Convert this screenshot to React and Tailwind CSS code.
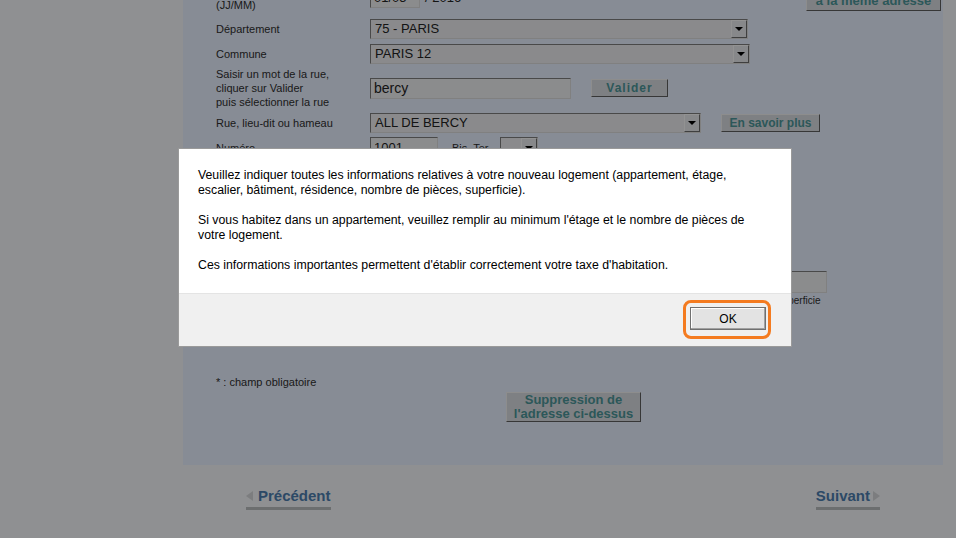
import { useState } from 'react'

function Select({ className, value }) {
    return (
        <div
            className={`flex h-[20px] border border-t-[#7a7a7a] border-l-[#7a7a7a] border-b-[#d6d6d6] border-r-[#d6d6d6] bg-[#e6e7ea] ${className}`}
        >
            <span className="flex-1 truncate pl-[4px] text-[13px] leading-[18px] text-[#222]">{value}</span>
            <span className="flex w-[16px] items-center justify-center border border-t-[#f4f4f4] border-l-[#f4f4f4] border-b-[#6a6a6a] border-r-[#6a6a6a] bg-[#e2e3e6]">
                <span className="h-0 w-0 border-x-[4px] border-t-[4px] border-x-transparent border-t-black"></span>
            </span>
        </div>
    )
}

function Field({ className, value }) {
    return (
        <div
            className={`flex items-center border border-t-[#7a7a7a] border-l-[#7a7a7a] border-b-[#d6d6d6] border-r-[#d6d6d6] bg-[#e8e9ec] pl-[3px] text-[13px] text-[#222] ${className}`}
        >
            {value}
        </div>
    )
}

function GrayButton({ className, children }) {
    return (
        <button
            className={`flex flex-col items-center justify-center border border-t-[#ececec] border-l-[#ececec] border-b-[#5c5c5c] border-r-[#5c5c5c] bg-[#d3d6da] font-bold text-[#4a9295] ${className}`}
        >
            {children}
        </button>
    )
}

function Row({ label, className = 'h-[25px] items-center', children }) {
    return (
        <div className={`flex ${className}`}>
            <div className="w-[154px] text-[11px] leading-[14px] text-[#2e2e2e]">{label}</div>
            {children}
        </div>
    )
}

function App() {
    const [open, setOpen] = useState(true)

    return (
        <div className="relative h-[538px] w-[956px] overflow-hidden bg-[#eef0f3] font-['Liberation_Sans',Arial,sans-serif]">
            <div className="ml-[183px] h-[465px] w-[760px] overflow-hidden bg-[#e1e9f8]">
                <div className="-mt-[22px] pl-[33px] pr-[2px]">
                    <div className="flex h-[38px] items-end">
                        <div className="mb-[4px] w-[154px] text-[11px] leading-[14px] text-[#2e2e2e]">
                            Date d'emménagement *
                            <br />
                            (JJ/MM)
                        </div>
                        <Field className="mb-[8px] h-[21px] w-[50px]" value="01/05" />
                        <span className="mb-[9px] ml-[5px] text-[13px] text-[#222]">/ 2016</span>
                        <GrayButton className="mb-[5px] ml-auto h-[36px] w-[135px] text-[13px] leading-[15px]">
                            <span>Déménagement</span>
                            <span>à la même adresse</span>
                        </GrayButton>
                    </div>

                    <Row label="Département">
                        <Select className="w-[378px]" value="75 - PARIS" />
                    </Row>
                    <Row label="Commune">
                        <Select className="w-[380px]" value="PARIS 12" />
                    </Row>
                    <Row
                        className="h-[44px] items-center"
                        label={
                            <>
                                Saisir un mot de la rue,
                                <br />
                                cliquer sur Valider
                                <br />
                                puis sélectionner la rue
                            </>
                        }
                    >
                        <Field className="h-[21px] w-[201px] text-[14px]" value="bercy" />
                        <GrayButton className="ml-[20px] h-[18px] w-[77px] text-[12px] tracking-[1px]">
                            Valider
                        </GrayButton>
                    </Row>
                    <Row className="h-[26px] items-center" label="Rue, lieu-dit ou hameau">
                        <Select className="w-[331px]" value="ALL DE BERCY" />
                        <GrayButton className="ml-[20px] h-[18px] w-[99px] text-[12px]">En savoir plus</GrayButton>
                    </Row>
                    <Row className="h-[24px] items-center" label="Numéro">
                        <Field className="h-[22px] w-[68px]" value="1001" />
                        <span className="ml-[14px] text-[11px] text-[#2e2e2e]">Bis, Ter</span>
                        <Select className="ml-[12px] !h-[22px] w-[38px]" value="" />
                    </Row>

                    <div className="mt-[111px] flex gap-[152px] pl-[154px]">
                        {['Étage', 'Nombre de pièces', 'Superficie'].map((label) => (
                            <div key={label} className="flex w-[51px] flex-col">
                                <Field className="h-[22px]" value="" />
                                <span className="mt-[2px] whitespace-nowrap text-[10px] leading-[12px] text-[#2e2e2e]">
                                    {label}
                                </span>
                            </div>
                        ))}
                    </div>

                    <p className="mt-[68px] text-[11px] leading-[14px] text-[#2e2e2e]">* : champ obligatoire</p>
                    <GrayButton className="ml-[290px] mt-[3px] h-[30px] w-[135px] text-[13px] leading-[14px]">
                        <span>Suppression de</span>
                        <span>l'adresse ci-dessus</span>
                    </GrayButton>
                </div>
            </div>

            <div className="flex justify-between pl-[246px] pr-[76px] pt-[22px]">
                <a className="flex flex-col">
                    <span className="flex items-center">
                        <span className="mr-[5px] h-0 w-0 border-y-[5px] border-r-[7px] border-y-transparent border-r-[#cfd1d4]"></span>
                        <span className="text-[15px] font-bold leading-[18px] text-[#4a7aab]">Précédent</span>
                    </span>
                    <span className="mt-[2px] h-[3px] bg-[#b5b7ba]"></span>
                </a>
                <a className="flex flex-col">
                    <span className="flex items-center">
                        <span className="text-[15px] font-bold leading-[18px] text-[#4a7aab]">Suivant</span>
                        <span className="ml-[3px] h-0 w-0 border-y-[5px] border-l-[7px] border-y-transparent border-l-[#cfd1d4]"></span>
                    </span>
                    <span className="mt-[2px] h-[3px] bg-[#b5b7ba]"></span>
                </a>
            </div>

            {open && (
                <>
                    <div className="absolute inset-0 bg-black/40"></div>
                    <div className="absolute left-[178px] top-[148px] w-[614px] border border-[#9a9a9a] bg-white">
                        <div className="h-[144px] px-[19px] pt-[19px] text-[12.3px] leading-[15px] text-black">
                            <p className="whitespace-nowrap">
                                Veuillez indiquer toutes les informations relatives à votre nouveau logement (appartement, étage,
                                <br />
                                escalier, bâtiment, résidence, nombre de pièces, superficie).
                            </p>
                            <p className="mt-[15px] whitespace-nowrap">
                                Si vous habitez dans un appartement, veuillez remplir au minimum l'étage et le nombre de pièces de
                                <br />
                                votre logement.
                            </p>
                            <p className="mt-[15px] whitespace-nowrap">
                                Ces informations importantes permettent d'établir correctement votre taxe d'habitation.
                            </p>
                        </div>
                        <div className="flex h-[53px] justify-end border-t border-[#e4e4e4] bg-[#f0f0f0] pr-[25px] pt-[13px]">
                            <button
                                onClick={() => setOpen(false)}
                                className="h-[23px] w-[76px] border border-[#707070] bg-[#e3e3e3] text-[12px] text-black shadow-[inset_-1px_-1px_0_#a0a0a0,inset_1px_1px_0_#fff]"
                            >
                                OK
                            </button>
                        </div>
                    </div>
                    <div className="absolute left-[683px] top-[300px] h-[39px] w-[88px] rounded-[8px] border-[3px] border-[#f47b20]"></div>
                </>
            )}
        </div>
    )
}

export default App
